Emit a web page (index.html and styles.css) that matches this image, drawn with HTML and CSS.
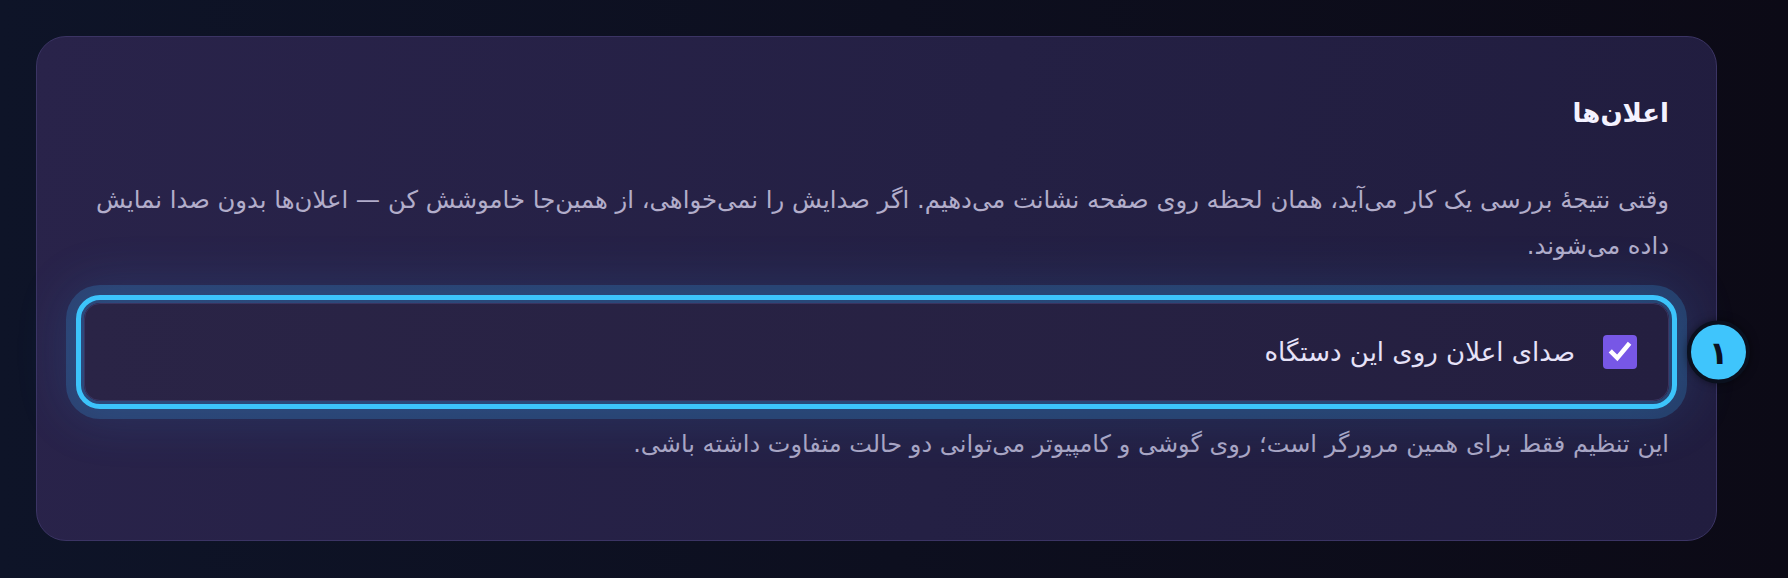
FILE: index.html
```html
<!DOCTYPE html>
<html lang="fa" dir="rtl">
<head>
    <meta charset="UTF-8">
    <title>اعلان‌ها</title>
    <link rel="stylesheet" href="styles.css">
</head>
<body>
    <div class="page">
        <section class="card">
            <h2 class="card-title">اعلان‌ها</h2>

            <p class="card-text">وقتی نتیجهٔ بررسی یک کار می‌آید، همان لحظه روی صفحه نشانت می‌دهیم. اگر صدایش را نمی‌خواهی، از همین‌جا خاموشش کن — اعلان‌ها بدون صدا نمایش داده می‌شوند.</p>

            <!-- ردیف تنظیم صدا (در حالت راهنما برجسته شده) -->
            <label class="setting-row is-highlighted">
                <span class="check">
                    <svg viewBox="0 0 24 24" width="26" height="26">
                        <path d="M4.5 12.5l5 5L19.5 5.5" fill="none" stroke="#fff" stroke-width="4.2" stroke-linecap="square" stroke-linejoin="miter"/>
                    </svg>
                </span>
                <span class="setting-label">صدای اعلان روی این دستگاه</span>
                <span class="step-badge">١</span>
            </label>

            <p class="card-note">این تنظیم فقط برای همین مرورگر است؛ روی گوشی و کامپیوتر می‌توانی دو حالت متفاوت داشته باشی.</p>
        </section>
    </div>
</body>
</html>
```

FILE: styles.css
```css
body {
    margin: 0;
    padding: 0;
    font-family: "DejaVu Sans", sans-serif;
    background: linear-gradient(90deg, #0e1428 0%, #0d0f1f 50%, #0c0a16 100%);
    height: 100vh;
    overflow: hidden;
}

.page {
    padding: 36px 71px 36px 36px;
    direction: ltr;
}

.card {
    direction: rtl;
    box-sizing: border-box;
    width: 1681px;
    height: 505px;
    padding: 58px 47px 40px 47px;
    border: 1px solid #3b3464;
    border-radius: 30px;
    background: linear-gradient(100deg, #29234a 0%, #242044 55%, #211d3f 100%);
}

.card-title {
    margin: 0 0 46px 0;
    font-size: 26px;
    line-height: 36px;
    font-weight: bold;
    color: #f4f2ff;
}

.card-text {
    margin: 0 0 34px 0;
    font-size: 24.3px;
    line-height: 46px;
    color: #b2adca;
}

.setting-row {
    position: relative;
    display: flex;
    align-items: center;
    gap: 28px;
    height: 98px;
    box-sizing: border-box;
    padding: 0 31px;
    border: 1px solid #3a335f;
    border-radius: 16px;
    background: linear-gradient(90deg, #2a2446, #241f40);
    cursor: pointer;
}

.setting-row.is-highlighted {
    outline: 5px solid #3cc4fb;
    outline-offset: 3px;
    box-shadow: 0 0 0 18px rgba(56, 170, 240, 0.22),
                0 0 50px 20px rgba(56, 150, 230, 0.15);
}

.check {
    display: flex;
    align-items: center;
    justify-content: center;
    width: 34px;
    height: 34px;
    border-radius: 4px;
    background-color: #7757e6;
    flex-shrink: 0;
}

.setting-label {
    font-size: 26px;
    color: #e6e2f8;
}

.step-badge {
    position: absolute;
    top: 50%;
    right: -82px;
    transform: translateY(-50%);
    width: 55px;
    height: 55px;
    border: 4px solid #0a101e;
    border-radius: 50%;
    background-color: #3fc5fc;
    color: #0b1120;
    font-size: 32px;
    font-weight: bold;
    display: flex;
    align-items: center;
    justify-content: center;
    box-shadow: 0 0 8px rgba(0, 0, 0, 0.5);
}

.card-note {
    margin: 20px 0 0 0;
    font-size: 24px;
    line-height: 46px;
    color: #aaa6c4;
}
```
